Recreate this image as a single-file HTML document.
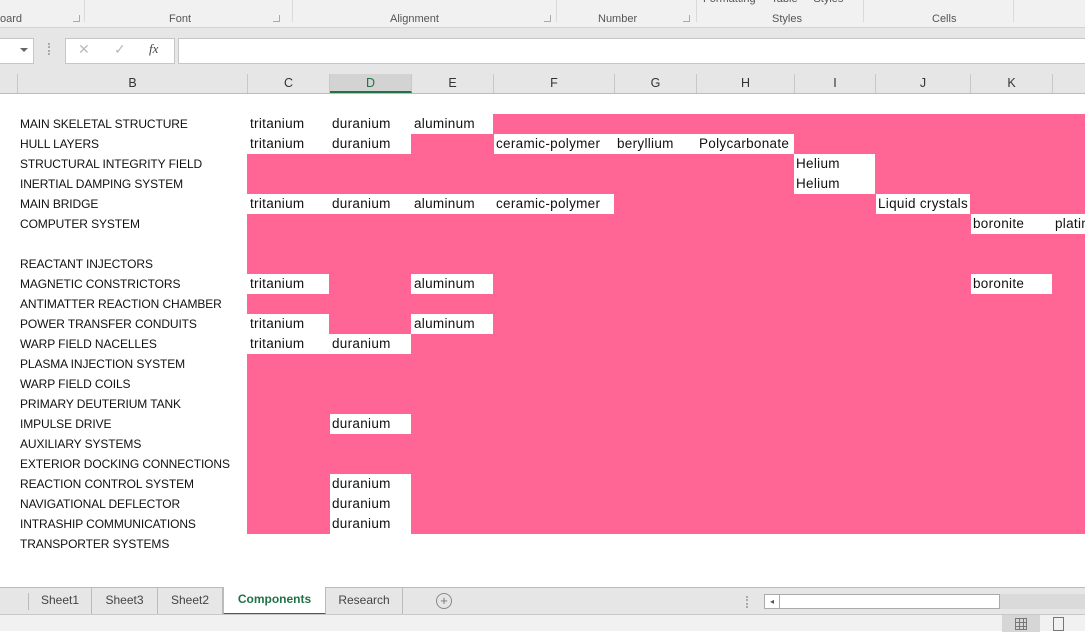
<!DOCTYPE html>
<html><head><meta charset="utf-8"><style>
*{margin:0;padding:0;box-sizing:border-box}
body{width:1085px;height:631px;overflow:hidden;background:#fff;font-family:"Liberation Sans",sans-serif;position:relative}
.a{position:absolute}
.rib{left:0;top:0;width:1085px;height:28px;background:#f1f1f1;border-bottom:1px solid #d4d4d4}
.gl{position:absolute;top:13px;font-size:11px;color:#555}
.gs{position:absolute;top:0;width:1px;height:22px;background:#dadada}
.cap{position:absolute;top:15px;width:7px;height:7px;border:1px solid #aaa;border-top:none;border-left:none}
.bar{left:0;top:28px;width:1085px;height:66px;background:#e6e6e6;border-bottom:1px solid #bdbdbd}
.box{position:absolute;top:38px;height:26px;background:#fff;border:1px solid #c6c6c6}
.ch{position:absolute;top:74px;height:19px;font-size:12.5px;color:#333;text-align:center;line-height:19px;border-right:1px solid #c8c8c8}
.pink{left:247px;top:114px;width:838px;height:420px;background:#ff6695}
.w{position:absolute;background:#fff;height:20px}
.t{position:absolute;font-size:13.5px;letter-spacing:0.3px;color:#111;height:20px;line-height:20px;white-space:nowrap}
.lb{position:absolute;left:20px;font-size:12px;color:#111;line-height:20px;height:20px;white-space:nowrap;letter-spacing:-0.1px}
.tabs{left:0;top:587px;width:1085px;height:27px;background:#e6e6e6;border-top:1px solid #bcbcbc}
.tab{position:absolute;top:0;height:26px;line-height:24px;font-size:12px;color:#444;text-align:center;border-right:1px solid #bbb}
.st{left:0;top:614px;width:1085px;height:17px;background:#f1f1f1;border-top:1px solid #c8c8c8}
</style></head><body>
<div class="a rib">
 <div class="gl" style="left:0">oard</div><div class="cap" style="left:73px"></div><div class="gs" style="left:84px"></div>
 <div class="gl" style="left:169px">Font</div><div class="cap" style="left:273px"></div><div class="gs" style="left:292px"></div>
 <div class="gl" style="left:390px">Alignment</div><div class="cap" style="left:544px"></div><div class="gs" style="left:556px"></div>
 <div class="gl" style="left:598px">Number</div><div class="cap" style="left:683px"></div><div class="gs" style="left:696px"></div>
 <div class="gl" style="left:703px;top:-7px">Formatting ·&nbsp;&nbsp; Table ·&nbsp;&nbsp; Styles ·</div>
 <div class="gl" style="left:772px">Styles</div><div class="gs" style="left:863px"></div>
 <div class="gl" style="left:932px">Cells</div><div class="gs" style="left:1013px"></div>
</div>
<div class="a bar">
 <div class="box" style="left:-1px;width:35px;top:10px"><span style="position:absolute;left:20px;top:9px;border:4px solid transparent;border-top:4px solid #666;border-bottom:none"></span></div>
 <div style="position:absolute;left:48px;top:15px;width:2px;height:12px;border-left:2px dotted #aaa"></div>
 <div class="box" style="left:65px;width:110px;top:10px;font-size:14px;color:#bbb">
  <span style="position:absolute;left:12px;top:2px">✕</span><span style="position:absolute;left:48px;top:2px">✓</span><span style="position:absolute;left:83px;top:2px;color:#444;font-family:'Liberation Serif',serif;font-style:italic;font-size:13px">fx</span></div>
 <div class="box" style="left:178px;width:910px;top:10px"></div>
</div>
<div class="ch" style="left:0;width:18px"></div>
<div class="ch" style="left:18px;width:230px">B</div>
<div class="ch" style="left:248px;width:82px">C</div>
<div class="ch" style="left:330px;width:82px;background:#d3d3d3;border-bottom:2px solid #217346;color:#217346">D</div>
<div class="ch" style="left:412px;width:82px">E</div>
<div class="ch" style="left:494px;width:121px">F</div>
<div class="ch" style="left:615px;width:82px">G</div>
<div class="ch" style="left:697px;width:98px">H</div>
<div class="ch" style="left:795px;width:81px">I</div>
<div class="ch" style="left:876px;width:95px">J</div>
<div class="ch" style="left:971px;width:82px">K</div>

<div class="a pink"></div>
<div class="w" style="left:247px;top:114px;width:246px"></div>
<div class="w" style="left:247px;top:134px;width:164px"></div>
<div class="w" style="left:494px;top:134px;width:300px"></div>
<div class="w" style="left:794px;top:154px;width:81px;height:40px"></div>
<div class="w" style="left:247px;top:194px;width:367px"></div>
<div class="w" style="left:876px;top:194px;width:94px"></div>
<div class="w" style="left:971px;top:214px;width:114px"></div>
<div class="w" style="left:247px;top:274px;width:82px"></div>
<div class="w" style="left:411px;top:274px;width:82px"></div>
<div class="w" style="left:971px;top:274px;width:81px"></div>
<div class="w" style="left:247px;top:314px;width:82px"></div>
<div class="w" style="left:411px;top:314px;width:82px"></div>
<div class="w" style="left:247px;top:334px;width:164px"></div>
<div class="w" style="left:330px;top:414px;width:81px"></div>
<div class="w" style="left:330px;top:474px;width:81px;height:60px"></div>

<div class="t" style="left:250px;top:114px">tritanium</div><div class="t" style="left:332px;top:114px">duranium</div><div class="t" style="left:414px;top:114px">aluminum</div>
<div class="t" style="left:250px;top:134px">tritanium</div><div class="t" style="left:332px;top:134px">duranium</div><div class="t" style="left:496px;top:134px">ceramic-polymer</div><div class="t" style="left:617px;top:134px">beryllium</div><div class="t" style="left:699px;top:134px">Polycarbonate</div>
<div class="t" style="left:796px;top:154px">Helium</div><div class="t" style="left:796px;top:174px">Helium</div>
<div class="t" style="left:250px;top:194px">tritanium</div><div class="t" style="left:332px;top:194px">duranium</div><div class="t" style="left:414px;top:194px">aluminum</div><div class="t" style="left:496px;top:194px">ceramic-polymer</div><div class="t" style="left:878px;top:194px">Liquid crystals</div>
<div class="t" style="left:973px;top:214px">boronite</div><div class="t" style="left:1055px;top:214px">platinum</div>
<div class="t" style="left:250px;top:274px">tritanium</div><div class="t" style="left:414px;top:274px">aluminum</div><div class="t" style="left:973px;top:274px">boronite</div>
<div class="t" style="left:250px;top:314px">tritanium</div><div class="t" style="left:414px;top:314px">aluminum</div>
<div class="t" style="left:250px;top:334px">tritanium</div><div class="t" style="left:332px;top:334px">duranium</div>
<div class="t" style="left:332px;top:414px">duranium</div>
<div class="t" style="left:332px;top:474px">duranium</div><div class="t" style="left:332px;top:494px">duranium</div><div class="t" style="left:332px;top:514px">duranium</div>

<div class="lb" style="top:114px">MAIN SKELETAL STRUCTURE</div>
<div class="lb" style="top:134px">HULL LAYERS</div>
<div class="lb" style="top:154px">STRUCTURAL INTEGRITY FIELD</div>
<div class="lb" style="top:174px">INERTIAL DAMPING SYSTEM</div>
<div class="lb" style="top:194px">MAIN BRIDGE</div>
<div class="lb" style="top:214px">COMPUTER SYSTEM</div>
<div class="lb" style="top:254px">REACTANT INJECTORS</div>
<div class="lb" style="top:274px">MAGNETIC CONSTRICTORS</div>
<div class="lb" style="top:294px">ANTIMATTER REACTION CHAMBER</div>
<div class="lb" style="top:314px">POWER TRANSFER CONDUITS</div>
<div class="lb" style="top:334px">WARP FIELD NACELLES</div>
<div class="lb" style="top:354px">PLASMA INJECTION SYSTEM</div>
<div class="lb" style="top:374px">WARP FIELD COILS</div>
<div class="lb" style="top:394px">PRIMARY DEUTERIUM TANK</div>
<div class="lb" style="top:414px">IMPULSE DRIVE</div>
<div class="lb" style="top:434px">AUXILIARY SYSTEMS</div>
<div class="lb" style="top:454px">EXTERIOR DOCKING CONNECTIONS</div>
<div class="lb" style="top:474px">REACTION CONTROL SYSTEM</div>
<div class="lb" style="top:494px">NAVIGATIONAL DEFLECTOR</div>
<div class="lb" style="top:514px">INTRASHIP COMMUNICATIONS</div>
<div class="lb" style="top:534px">TRANSPORTER SYSTEMS</div>

<div class="a tabs">
 <div style="position:absolute;left:28px;top:5px;width:1px;height:17px;background:#bbb"></div>
 <div class="tab" style="left:29px;width:63px">Sheet1</div>
 <div class="tab" style="left:92px;width:66px">Sheet3</div>
 <div class="tab" style="left:158px;width:65px">Sheet2</div>
 <div class="tab" style="left:223px;width:103px;background:#fff;top:-1px;height:28px;font-weight:bold;color:#217346;border-bottom:2px solid #217346;border-left:1px solid #bbb">Components</div>
 <div class="tab" style="left:326px;width:77px">Research</div>
 <div style="position:absolute;left:436px;top:5px;width:16px;height:16px;border:1px solid #888;border-radius:50%;font-size:13px;line-height:13px;text-align:center;color:#777">+</div>
 <div style="position:absolute;left:746px;top:8px;height:12px;border-left:2px dotted #aaa"></div>
 <div style="position:absolute;left:764px;top:6px;width:236px;height:15px;background:#fff;border:1px solid #aaa"><div style="position:absolute;left:0;top:0;width:15px;height:13px;border-right:1px solid #aaa;font-size:8px;color:#555;text-align:center;line-height:13px">◂</div></div>
 <div style="position:absolute;left:1000px;top:6px;width:85px;height:15px;background:#dadada"></div>
</div>
<div class="a st">
 <div style="position:absolute;left:1002px;top:0;width:38px;height:17px;background:#d6d6d6"></div>
 <div style="position:absolute;left:1015px;top:3px;width:12px;height:12px;border:1px solid #777;background:linear-gradient(90deg,transparent 3px,#777 3px,#777 4px,transparent 4px,transparent 7px,#777 7px,#777 8px,transparent 8px),linear-gradient(transparent 3px,#777 3px,#777 4px,transparent 4px,transparent 7px,#777 7px,#777 8px,transparent 8px)"></div>
 <div style="position:absolute;left:1053px;top:2px;width:11px;height:14px;border:1px solid #777"></div>
</div>
</body></html>
